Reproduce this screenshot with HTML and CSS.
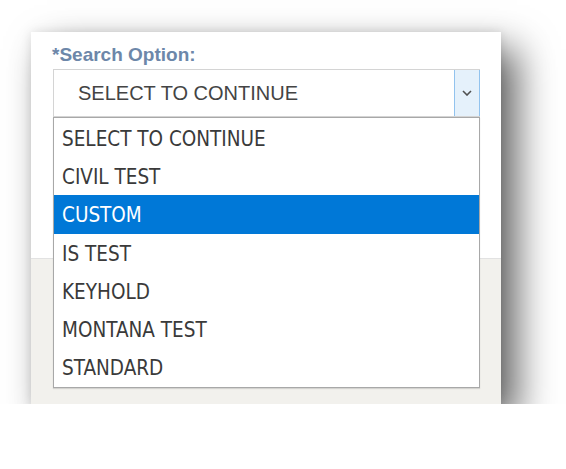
FILE: index.html
```html
<!DOCTYPE html>
<html>
<head>
<meta charset="utf-8">
<link rel="stylesheet" href="styles.css">
</head>
<body>
<div class="panel">
  <div class="panel-top">
    <div class="field-label">*Search Option:</div>
    <div class="select">
      <span class="select-value">SELECT TO CONTINUE</span>
      <span class="select-btn">
        <svg width="10" height="6" viewBox="0 0 10 6"><path d="M1 1 L5 5 L9 1" fill="none" stroke="#505050" stroke-width="1.6"/></svg>
      </span>
    </div>
  </div>
  <div class="panel-bottom"></div>
  <ul class="dropdown">
    <li class="option">SELECT TO CONTINUE</li>
    <li class="option">CIVIL TEST</li>
    <li class="option selected">CUSTOM</li>
    <li class="option">IS TEST</li>
    <li class="option">KEYHOLD</li>
    <li class="option">MONTANA TEST</li>
    <li class="option">STANDARD</li>
  </ul>
</div>
</body>
</html>
```

FILE: styles.css
```css
html, body {
  margin: 0;
  padding: 0;
  background: #ffffff;
}

body {
  padding: 32px 0 0 31px;
}

.panel {
  position: relative;
  width: 470px;
  height: 372px;
  display: flex;
  flex-direction: column;
  background: #ffffff;
  box-shadow: 16px 17px 36px rgba(0, 0, 0, 0.62), 0 0 10px rgba(0, 0, 0, 0.10);
}

.panel-top {
  height: 226px;
  padding: 12px 21px 0 22px;
  box-sizing: border-box;
  background: #ffffff;
}

.field-label {
  font-family: "Liberation Sans", Arial, sans-serif;
  font-weight: bold;
  font-size: 19px;
  line-height: 22px;
  color: #6d87a9;
  margin-left: -1px;
}

.select {
  margin-top: 3px;
  height: 48px;
  box-sizing: border-box;
  border: 1px solid #d4d4d4;
  display: flex;
  align-items: stretch;
  background: #ffffff;
}

.select-value {
  flex: 1;
  display: flex;
  align-items: center;
  padding-left: 24px;
  font-family: "Liberation Sans", Arial, sans-serif;
  font-size: 20px;
  color: #444444;
}

.select-btn {
  width: 24px;
  background: #e5f1fb;
  border-left: 1px solid #92c3ee;
  border-right: 1px solid #92c3ee;
  margin-right: -1px;
  display: flex;
  align-items: center;
  justify-content: center;
}

.panel-bottom {
  flex: 1;
  background: #f2f1ed;
  border-top: 1px solid #e2e2e2;
}

.dropdown {
  position: absolute;
  top: 85px;
  left: 22px;
  width: 427px;
  box-sizing: border-box;
  margin: 0;
  padding: 1px 0 1px;
  list-style: none;
  background: #ffffff;
  border: 1px solid #a8a8a8;
  box-shadow: 0 1px 1px rgba(0, 0, 0, 0.12);
}

.option {
  height: 38.2px;
  box-sizing: border-box;
  padding-top: 3px;
  line-height: 35px;
  padding-left: 8px;
  font-family: "DejaVu Sans Condensed", "DejaVu Sans", sans-serif;
  font-stretch: condensed;
  font-size: 20.5px;
  color: #3a3a3a;
}

.option.selected {
  background: #0078d7;
  color: #ffffff;
}
```
